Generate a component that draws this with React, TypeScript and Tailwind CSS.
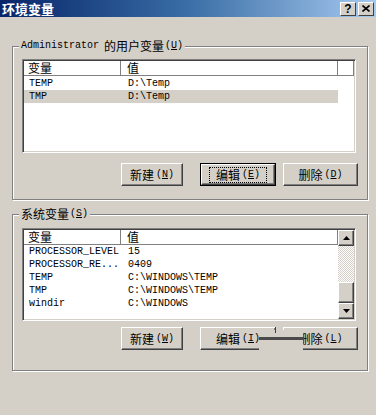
import type { ReactNode } from 'react';

const MONO = "font-['Liberation_Mono','Noto_Sans_CJK_SC',monospace]";
const CJK = "font-['Noto_Sans_CJK_SC',sans-serif]";

function Key({ k }: { k: string }) {
  return (
    <span className={`${MONO} text-[10px]`}>
      (<span className="underline underline-offset-1">{k}</span>)
    </span>
  );
}

function Btn({ label, k, w, isDefault }: { label: string; k: string; w: string; isDefault?: boolean }) {
  const face = (
    <div className="flex h-full w-full items-center justify-center border border-t-white border-l-white border-r-[#404040] border-b-[#404040] bg-[#d4d0c8] shadow-[inset_-1px_-1px_0_#808080]">
      <span
        className={`flex items-center gap-[2px] px-[6px] leading-[14px] ${
          isDefault ? 'border border-dotted border-black' : 'border border-transparent'
        }`}
      >
        <span className={`${CJK} text-[12px]`}>{label}</span>
        <Key k={k} />
      </span>
    </div>
  );
  return (
    <div className={`h-[23px] ${w} ${isDefault ? 'border border-black' : ''}`}>{face}</div>
  );
}

function HeaderCell({ children, w, pl }: { children?: ReactNode; w: string; pl: string }) {
  return (
    <div
      className={`flex h-[15px] ${w} ${pl} items-center border-r border-b border-r-[#808080] border-b-[#808080] shadow-[inset_1px_1px_0_#fff] ${CJK} text-[12px] leading-none`}
    >
      {children}
    </div>
  );
}

function Rows({ rows, selected }: { rows: [string, string][]; selected?: number }) {
  return (
    <div className="flex flex-col">
      {rows.map(([n, v], i) => (
        <div
          key={n}
          className={`flex h-[13px] items-center ${MONO} text-[10px] ${i === selected ? 'bg-[#d4d0c8]' : ''} w-[314px]`}
        >
          <span className="w-[97px] pl-[5px] whitespace-pre">{n}</span>
          <span className="pl-[7px] whitespace-pre">{v}</span>
        </div>
      ))}
    </div>
  );
}

function Header({ filler }: { filler?: boolean }) {
  return (
    <div className="flex">
      <HeaderCell w="w-[97px]" pl="pl-[4px]">变量</HeaderCell>
      <HeaderCell w="w-[217px]" pl="pl-[6px]">值</HeaderCell>
      {filler && <HeaderCell w="w-[16px]" pl="pl-0" />}
    </div>
  );
}

function Arrow({ up }: { up?: boolean }) {
  return (
    <div className="flex h-[16px] w-[16px] items-center justify-center border border-t-white border-l-white border-r-[#404040] border-b-[#404040] bg-[#d4d0c8] shadow-[inset_-1px_-1px_0_#808080]">
      <svg width="7" height="4" viewBox="0 0 7 4">
        {up ? <polygon points="3.5,0 7,4 0,4" fill="#000" /> : <polygon points="0,0 7,0 3.5,4" fill="#000" />}
      </svg>
    </div>
  );
}

function ListBox({ children, h }: { children: ReactNode; h: string }) {
  return (
    <div
      className={`${h} w-[334px] overflow-hidden border border-t-[#808080] border-l-[#808080] border-r-white border-b-white bg-white shadow-[inset_1px_1px_0_#404040,inset_-1px_-1px_0_#d4d0c8] p-[1px]`}
    >
      {children}
    </div>
  );
}

function Group({ label, children, h }: { label: ReactNode; children: ReactNode; h: string }) {
  return (
    <div
      className={`relative ml-[12px] w-[356px] ${h} border border-[#808080] shadow-[inset_1px_1px_0_#fff,1px_1px_0_#fff]`}
    >
      <div className="absolute -top-[8px] left-[6px] flex items-center gap-[1px] bg-[#d4d0c8] px-[2px] leading-[14px]">
        {label}
      </div>
      {children}
    </div>
  );
}

export default function App() {
  return (
    <div className="relative h-[415px] w-[376px] overflow-hidden bg-[#d4d0c8] text-black">
      {/* Title bar */}
      <div className="flex h-[17px] items-center justify-between bg-gradient-to-r from-[#0a246a] via-[#3a6ea5] to-[#a6caf0] pl-[2px] pr-[2px]">
        <span className={`${CJK} text-[13px] font-bold leading-none text-white`}>环境变量</span>
        <div className="flex gap-[2px]">
          <div className="flex h-[14px] w-[16px] items-center justify-center border border-t-white border-l-white border-r-[#404040] border-b-[#404040] bg-[#d4d0c8] font-['Liberation_Sans',sans-serif] text-[12px] font-bold leading-none">
            ?
          </div>
          <div className="flex h-[14px] w-[16px] items-center justify-center border border-t-white border-l-white border-r-[#404040] border-b-[#404040] bg-[#d4d0c8]">
            <svg width="8" height="7" viewBox="0 0 8 7">
              <path d="M0.5 0.5 L7.5 6.5 M7.5 0.5 L0.5 6.5" stroke="#000" strokeWidth="1.6" />
            </svg>
          </div>
        </div>
      </div>

      {/* User variables */}
      <div className="mt-[29px]">
        <Group
          h="h-[154px]"
          label={
            <>
              <span className={`${MONO} text-[10px]`}>Administrator</span>
              <span className={`${CJK} ml-[4px] text-[12px]`}>的用户变量</span>
              <Key k="U" />
            </>
          }
        >
          <div className="pl-[9px] pt-[12px]">
            <ListBox h="h-[94px]">
              <Header filler />
              <div className="mt-[1px]">
                <Rows
                  rows={[
                    ['TEMP', 'D:\\Temp'],
                    ['TMP', 'D:\\Temp'],
                  ]}
                  selected={1}
                />
              </div>
            </ListBox>
          </div>
          <div className="mt-[10px] flex pl-[108px]">
            <Btn label="新建" k="N" w="w-[62px]" />
            <div className="ml-[17px]">
              <Btn label="编辑" k="E" w="w-[76px]" isDefault />
            </div>
            <div className="ml-[7px]">
              <Btn label="删除" k="D" w="w-[75px]" />
            </div>
          </div>
        </Group>
      </div>

      {/* System variables */}
      <div className="mt-[14px]">
        <Group
          h="h-[157px]"
          label={
            <>
              <span className={`${CJK} text-[12px]`}>系统变量</span>
              <Key k="S" />
            </>
          }
        >
          <div className="pl-[9px] pt-[13px]">
            <ListBox h="h-[93px]">
              <div className="flex">
                <div className="flex flex-col">
                  <Header />
                  <Rows
                    rows={[
                      ['PROCESSOR_LEVEL', '15'],
                      ['PROCESSOR_RE...', '0409'],
                      ['TEMP', 'C:\\WINDOWS\\TEMP'],
                      ['TMP', 'C:\\WINDOWS\\TEMP'],
                      ['windir', 'C:\\WINDOWS'],
                    ]}
                  />
                </div>
                <div className="flex w-[16px] flex-col">
                  <Arrow up />
                  <div className="h-[36px] bg-[repeating-conic-gradient(#fff_0_25%,#d4d0c8_0_50%)] bg-size-[2px_2px]" />
                  <div className="h-[21px] border border-t-white border-l-white border-r-[#404040] border-b-[#404040] bg-[#d4d0c8] shadow-[inset_-1px_-1px_0_#808080]" />
                  <Arrow />
                </div>
              </div>
            </ListBox>
          </div>
          <div className="relative mt-[6px] flex pl-[108px]">
            <Btn label="新建" k="W" w="w-[62px]" />
            <div className="ml-[17px]">
              <Btn label="编辑" k="I" w="w-[76px]" />
            </div>
            <div className="ml-[7px]">
              <Btn label="删除" k="L" w="w-[75px]" />
            </div>
            {/* redraw glitch over the buttons */}
            <div className="absolute left-[246px] top-[3px] h-[22px] w-[44px] bg-[#d4d0c8]" />
            <div className="absolute left-[246px] top-[10px] h-[3px] w-[45px] bg-[#4a4a4a]" />
            <div className="absolute left-[262px] top-[0px] h-[6px] w-[1px] bg-[#404040]" />
          </div>
        </Group>
      </div>
    </div>
  );
}
